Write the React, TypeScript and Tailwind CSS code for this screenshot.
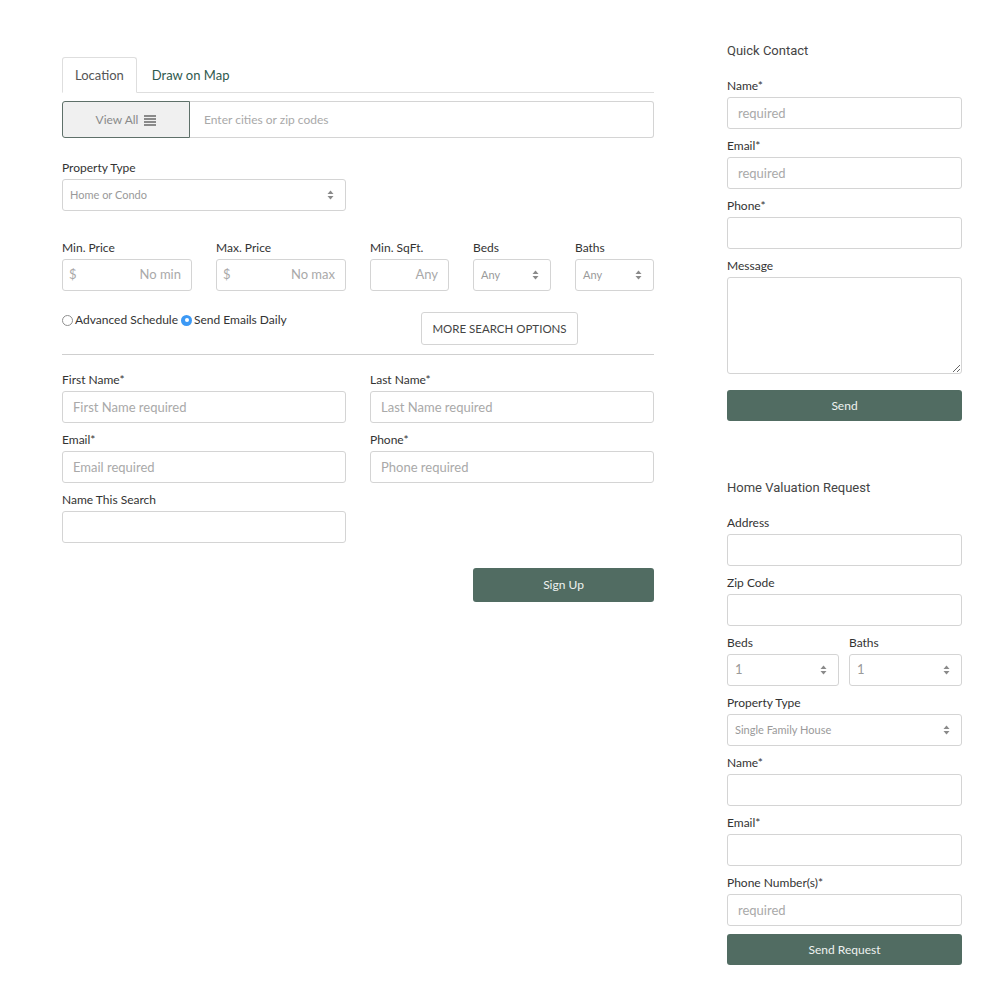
import { ReactNode } from "react";

const inputBase =
  "h-[32px] w-full rounded-[3px] border border-[#d4d4d4] bg-white px-[10px] text-[13px] text-[#555] placeholder:text-[#a9a9a9] outline-none";

function Label({ children }: { children: ReactNode }) {
  return (
    <label className="mb-[3px] block pt-[1px] text-[12px] leading-[16px] text-[#333]">
      {children}
    </label>
  );
}

function SortArrows({ color = "#8a8a8a" }: { color?: string }) {
  return (
    <svg width="7" height="10" viewBox="0 0 7 10" fill={color}>
      <path d="M3.5 0.5 L6.5 4 L0.5 4 Z" />
      <path d="M3.5 9.5 L6.5 6 L0.5 6 Z" />
    </svg>
  );
}

function FakeSelect({
  value,
  className = "",
  size = "text-[11px]",
}: {
  value: string;
  className?: string;
  size?: string;
}) {
  return (
    <div
      className={`flex h-[32px] items-center justify-between rounded-[3px] border border-[#d4d4d4] bg-white pl-[7px] pr-[11px] ${className}`}
    >
      <span className={`${size} text-[#9a9a9a]`}>{value}</span>
      <SortArrows />
    </div>
  );
}

function Field({
  label,
  placeholder = "",
}: {
  label: string;
  placeholder?: string;
}) {
  return (
    <div className="mb-[8px]">
      <Label>{label}</Label>
      <input className={inputBase} placeholder={placeholder} />
    </div>
  );
}

function Radio({ checked, label }: { checked?: boolean; label: string }) {
  return (
    <span className="inline-flex items-center gap-[2px]">
      {checked ? (
        <span className="flex h-[11px] w-[11px] items-center justify-center rounded-full bg-[#3c99f5]">
          <span className="h-[4px] w-[4px] rounded-full bg-white" />
        </span>
      ) : (
        <span className="h-[11px] w-[11px] rounded-full border border-[#8f8f8f] bg-white" />
      )}
      <span className="text-[12px] text-[#333]">{label}</span>
    </span>
  );
}

function SearchForm() {
  return (
    <div className="w-[592px] pt-[57px]">
      {/* tabs */}
      <div className="flex h-[36px] items-end border-b border-[#dedede]">
        <div className="-mb-px flex h-[36px] items-center rounded-t-[3px] border border-b-white border-[#dedede] bg-white px-[12px] pt-[2px] text-[13px] text-[#555]">
          Location
        </div>
        <div className="flex h-[36px] items-center px-[15px] pt-[3px] text-[13px] text-[#2f5a4e]">
          Draw on Map
        </div>
      </div>

      <div className="mt-[8px] flex h-[37px]">
        <div className="flex w-[128px] items-center justify-center gap-[6px] rounded-l-[3px] border border-[#5e7069] bg-[#f0f0f0] pt-[1px] text-[12px] text-[#8a8a8a]">
          View All
          <svg width="12" height="11" viewBox="0 0 12 11" fill="#8a8a8a">
            <rect x="0" y="0" width="12" height="2" />
            <rect x="0" y="3" width="12" height="2" />
            <rect x="0" y="6" width="12" height="2" />
            <rect x="0" y="9" width="12" height="2" />
          </svg>
        </div>
        <input
          className="flex-1 rounded-r-[3px] border border-l-0 border-[#d4d4d4] px-[14px] pt-[1px] text-[12px] text-[#555] placeholder:text-[#a9a9a9] outline-none"
          placeholder="Enter cities or zip codes"
        />
      </div>

      <div className="mt-[21px]">
        <Label>Property Type</Label>
        <FakeSelect value="Home or Condo" className="w-[284px]" />
      </div>

      <div className="mt-[28px] flex gap-[24px]">
        <div className="w-[130px]">
          <Label>Min. Price</Label>
          <div className="flex h-[32px] items-center justify-between rounded-[3px] border border-[#d4d4d4] px-[6px] pr-[10px] text-[13px] text-[#a9a9a9]">
            <span>$</span>
            <span>No min</span>
          </div>
        </div>
        <div className="w-[130px]">
          <Label>Max. Price</Label>
          <div className="flex h-[32px] items-center justify-between rounded-[3px] border border-[#d4d4d4] px-[6px] pr-[10px] text-[13px] text-[#a9a9a9]">
            <span>$</span>
            <span>No max</span>
          </div>
        </div>
        <div className="w-[79px]">
          <Label>Min. SqFt.</Label>
          <div className="flex h-[32px] items-center justify-end rounded-[3px] border border-[#d4d4d4] pr-[10px] text-[13px] text-[#a9a9a9]">
            Any
          </div>
        </div>
        <div className="w-[78px]">
          <Label>Beds</Label>
          <FakeSelect value="Any" />
        </div>
        <div className="flex-1">
          <Label>Baths</Label>
          <FakeSelect value="Any" />
        </div>
      </div>

      <div className="mt-[21px] flex h-[33px]">
        <div className="flex h-[16px] items-center gap-[3px]">
          <Radio label="Advanced Schedule" />
          <Radio checked label="Send Emails Daily" />
        </div>
        <button className="ml-auto mr-[76px] h-[33px] w-[157px] rounded-[3px] border border-[#d4d4d4] bg-white text-[11.5px] text-[#444]">
          MORE SEARCH OPTIONS
        </button>
      </div>

      <div className="mt-[9px] border-t border-[#cfcfcf]" />

      <div className="mt-[16px] grid grid-cols-2 gap-x-[24px]">
        <Field label="First Name*" placeholder="First Name required" />
        <Field label="Last Name*" placeholder="Last Name required" />
        <Field label="Email*" placeholder="Email required" />
        <Field label="Phone*" placeholder="Phone required" />
        <Field label="Name This Search" />
      </div>

      <div className="mt-[17px] flex justify-end">
        <button className="h-[34px] w-[181px] rounded-[3px] bg-[#516c62] text-[12px] text-[#eef2f0]">
          Sign Up
        </button>
      </div>
    </div>
  );
}

function Heading({ children }: { children: ReactNode }) {
  return (
    <h3 className="mb-[16px] font-['Roboto',sans-serif] text-[13px] font-normal leading-[20px] text-[#444]">
      {children}
    </h3>
  );
}

function Sidebar() {
  return (
    <div className="w-[235px] pt-[41px]">
      <Heading>Quick Contact</Heading>
      <Field label="Name*" placeholder="required" />
      <Field label="Email*" placeholder="required" />
      <Field label="Phone*" />
      <div>
        <Label>Message</Label>
        <textarea className="block h-[97px] w-full rounded-[3px] border border-[#d4d4d4] bg-white outline-none" />
      </div>
      <button className="mt-[16px] h-[31px] w-full rounded-[3px] bg-[#516c62] text-[12px] text-[#eef2f0]">
        Send
      </button>

      <div className="mt-[57px]">
        <Heading>Home Valuation Request</Heading>
        <Field label="Address" />
        <Field label="Zip Code" />
        <div className="mb-[8px] flex gap-[10px]">
          <div className="w-[112px]">
            <Label>Beds</Label>
            <FakeSelect value="1" size="text-[13px]" />
          </div>
          <div className="flex-1">
            <Label>Baths</Label>
            <FakeSelect value="1" size="text-[13px]" />
          </div>
        </div>
        <div className="mb-[8px]">
          <Label>Property Type</Label>
          <FakeSelect value="Single Family House" />
        </div>
        <Field label="Name*" />
        <Field label="Email*" />
        <Field label="Phone Number(s)*" placeholder="required" />
        <button className="h-[31px] w-full rounded-[3px] bg-[#516c62] text-[12px] text-[#eef2f0]">
          Send Request
        </button>
      </div>
    </div>
  );
}

export default function App() {
  return (
    <div className="flex min-h-[1000px] w-[1000px] gap-[73px] bg-white pl-[62px] font-['Lato',sans-serif]">
      <SearchForm />
      <Sidebar />
    </div>
  );
}
